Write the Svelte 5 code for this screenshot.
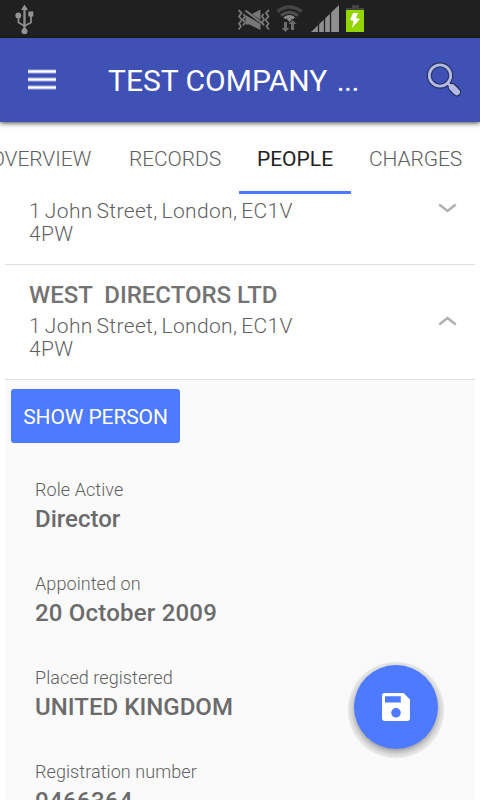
<script>
	const tabs = [
		{ label: 'OVERVIEW', width: 140 },
		{ label: 'RECORDS', width: 128 },
		{ label: 'PEOPLE', width: 112 },
		{ label: 'CHARGES', width: 129 }
	];
	let activeTab = $state('PEOPLE');

	let people = $state([
		{ name: '', address: '1 John Street, London, EC1V 4PW', open: false },
		{ name: 'WEST  DIRECTORS LTD', address: '1 John Street, London, EC1V 4PW', open: true }
	]);

	const details = [
		{ label: 'Role Active', value: 'Director', spacing: 0 },
		{ label: 'Appointed on', value: '20 October 2009', spacing: 0.2 },
		{ label: 'Placed registered', value: 'UNITED KINGDOM', spacing: 0.03 },
		{ label: 'Registration number', value: '0466364', spacing: 0.35 }
	];
</script>

<div class="screen">
	<div class="status">
		<svg class="usb" width="20" height="32" viewBox="0 0 20 32">
			<g fill="none" stroke="#8c8c8c" stroke-width="1.8">
				<path d="M9.5 4v24" stroke-width="2.4" />
				<path d="M3.5 12v6.5l6 3.5M16 11v7.5L9.5 22" />
			</g>
			<g fill="#949494">
				<path d="M9.5 0.5l3.5 5.500H6z" />
				<circle cx="3.3" cy="11.500" r="2.900" />
				<path d="M13.3 7.5h5v5h-5z" />
				<circle cx="9.5" cy="27.2" r="3" />
			</g>
		</svg>
		<svg class="tray" width="150" height="38" viewBox="230 0 150 38">
			<g fill="none" stroke="#777" stroke-width="1.8">
				<path d="M238.500 10l3 3-2.500 3.500 3 3.500-3 3.500 2 3-2.500 3" />
				<path d="M243.500 14l1.500 2.500-2 3 2 3-2 3" />
				<path d="M269 10l-3 3 2.500 3.500-3 3.500 3 3.500-2 3 2.500 3" />
				<path d="M263.500 14l-1.500 2.500 2 3-2 3 2 3" />
			</g>
			<path d="M245.500 15v9.500h4l11 5.500v-6zM252 14l8.500-4.500V20z" fill="#777" />
			<path d="M245.500 10.500l17.500 13.500" stroke="#777" stroke-width="2.200" />
			<g fill="none">
				<path d="M277.500 11.500q12-9 24 0" stroke="#454545" stroke-width="3.600" />
				<path d="M281 15.500q8.500-6.500 17 0" stroke="#505050" stroke-width="3" />
				<path d="M284.300 18.300q5-3.800 10 0" stroke="#8a8a8a" stroke-width="2.600" />
			</g>
			<path d="M286.500 18.500q3-1.500 6 0l-3 3.500z" fill="#8a8a8a" />
			<path d="M284 22h3v6h2.500l-4 4-4-4H284zM291 30v-6h-2.500l4-4 4 4H294v6z" fill="#6c6c6c" />
			<path d="M311 32l28-27v27z" fill="#8f8f8f" />
			<path d="M318.500 24v8M324.500 18v14M330.500 12v20" stroke="#202020" stroke-width="1.300" />
			<path d="M352 5h7v3h5v2h-18V8h6z" fill="#434343" />
			<path d="M346 10h18v22h-18z" fill="#93d500" />
			<path d="M353 13h5l-2 5 4 1-8 9 1.500-7-3.500-1z" fill="#fff" />
			<path d="M373 13h1v2h-1zM373 22h1v2h-1z" fill="#2a2a2a" />
		</svg>
	</div>

	<header class="toolbar">
		<svg width="28" height="22" viewBox="0 0 28 22">
			<path d="M0 2.500h28M0 10.500h28M0 18.500h28" stroke="#a9b0de" stroke-width="4" />
			<path d="M0 2.500h28M0 10.500h28M0 18.500h28" stroke="#fff" stroke-width="2" />
		</svg>
		<h1>TEST COMPANY <span>...</span></h1>
		<svg width="36" height="36" viewBox="0 0 36 36">
			<g stroke="#262f62" fill="none">
				<circle cx="14" cy="13.500" r="10.700" stroke-width="5" />
				<path d="M21.500 21l3 3" stroke-width="5" />
				<path d="M26.200 25.500l4.500 4.500" stroke-width="9" stroke-linecap="round" />
			</g>
			<g stroke="#b3bbe3" fill="none">
				<circle cx="14" cy="13.500" r="10.700" stroke-width="2.800" />
				<path d="M21.500 21l3 3" stroke-width="2.500" />
				<path d="M26.200 25.500l4.500 4.500" stroke-width="6.500" stroke-linecap="round" />
			</g>
		</svg>
	</header>

	<nav class="tabs">
		{#each tabs as tab}
			<button
				class="tab"
				class:active={tab.label === activeTab}
				style="width: {tab.width}px"
				onclick={() => (activeTab = tab.label)}
			>
				{tab.label}
			</button>
		{/each}
	</nav>

	<main class="content">
		<div class="list">
			{#each people as person}
				<div class="person" onclick={() => (person.open = !person.open)} role="presentation">
					<div class="info">
						<div class="name">{person.name}</div>
						<div class="address">{person.address}</div>
					</div>
					<svg class="chevron" class:open={person.open} width="19" height="12" viewBox="0 0 19 12">
						<path d="M1.200 3.500l8.300 6.500L17.800 3.500" fill="none" stroke="#b0b0b0" stroke-width="2.400" />
					</svg>
				</div>
				{#if person.open}
					<div class="details">
						<button class="show">SHOW PERSON</button>
						{#each details as item}
							<div class="field">
								<div class="label">{item.label}</div>
								<div class="value" style="letter-spacing: {item.spacing}px">{item.value}</div>
							</div>
						{/each}
					</div>
				{/if}
			{/each}
		</div>
	</main>

	<button class="fab" aria-label="Save">
		<svg width="28" height="28" viewBox="0 0 28 28">
			<path
				d="M3 0h18.500L28 6.500V25a3 3 0 0 1-3 3H3a3 3 0 0 1-3-3V3a3 3 0 0 1 3-3z M3 3.300v6.200h15.800V3.300z M14 15a4.800 4.800 0 1 0 0 9.600a4.800 4.800 0 0 0 0-9.600z"
				fill="#fff"
				fill-rule="evenodd"
			/>
		</svg>
	</button>
</div>

<style>
	:global(body) {
		margin: 0;
		background: #fff;
	}
	.screen {
		position: relative;
		display: flex;
		flex-direction: column;
		width: 480px;
		height: 800px;
		overflow: hidden;
		background: #fff;
		font-family: Roboto, sans-serif;
		color: #737373;
	}
	button {
		border: 0;
		padding: 0;
		font-family: inherit;
		cursor: pointer;
	}
	svg {
		display: block;
		flex: none;
	}
	.status {
		display: flex;
		flex: none;
		justify-content: space-between;
		height: 38px;
		background: #202020;
	}
	.usb {
		margin: 4px 0 0 15px;
	}
	.tray {
		margin-right: 100px;
	}
	.toolbar {
		display: flex;
		flex: none;
		align-items: center;
		box-sizing: border-box;
		height: 84px;
		padding: 0 18px 0 28px;
		background: #3f51b5;
		box-shadow: 0 1px 5px rgba(0, 0, 0, 0.75);
		z-index: 2;
	}
	h1 {
		flex: 1;
		margin: 0 0 0 52px;
		padding-top: 2px;
		font-size: 30px;
		font-weight: 400;
		line-height: 36px;
		color: #fff;
		white-space: nowrap;
	}
	h1 span {
		margin-left: 2px;
		letter-spacing: -0.6px;
	}
	.tabs {
		display: flex;
		flex: none;
		width: 509px;
		height: 72px;
		margin-left: -29px;
		background: #fff;
		z-index: 1;
	}
	.tab {
		flex: none;
		box-sizing: border-box;
		padding-top: 5px;
		background: none;
		border-bottom: 3px solid transparent;
		font-size: 21px;
		font-weight: 300;
		letter-spacing: -0.1px;
		color: #606060;
	}
	.tab.active {
		border-bottom-color: #4d7aff;
		color: #222;
		font-weight: 400;
		letter-spacing: 0;
	}
	.content {
		flex: 1;
		min-height: 0;
		overflow: hidden;
	}
	/* the list is scrolled so that the first name sits under the tabs */
	.list {
		margin: -44px 5px 0;
	}
	.person {
		display: flex;
		align-items: center;
		box-sizing: border-box;
		height: 115px;
		padding: 0 18px 0 24px;
		border-bottom: 1px solid #e0e0e0;
	}
	.info {
		width: 300px;
		margin-right: auto;
	}
	.name {
		height: 24px;
		padding-bottom: 8px;
		font-size: 24px;
		font-weight: 500;
		line-height: 24px;
		white-space: pre;
	}
	.address {
		width: 280px;
		font-size: 21px;
		font-weight: 300;
		line-height: 23px;
		letter-spacing: 0.35px;
		word-spacing: -1.6px;
		color: #5f5f5f;
	}
	.chevron.open {
		transform: scaleY(-1);
	}
	.details {
		padding: 9px 6px 0;
		background: #fafafa;
	}
	.show {
		display: block;
		width: 169px;
		height: 54px;
		padding-top: 2px;
		margin-bottom: 34px;
		border-radius: 3px;
		background: #4d7aff;
		color: #fff;
		font-size: 21px;
		letter-spacing: -0.1px;
	}
	.field {
		height: 94px;
		padding-left: 24px;
	}
	.label {
		font-size: 18px;
		line-height: 26px;
		font-weight: 300;
		letter-spacing: 0.08px;
		color: #5f5f5f;
	}
	.value {
		font-size: 24px;
		line-height: 32px;
		font-weight: 500;
		color: #6b6b6b;
	}
	.fab {
		position: absolute;
		left: 354px;
		top: 665px;
		display: flex;
		align-items: center;
		justify-content: center;
		width: 84px;
		height: 84px;
		border-radius: 50%;
		background: #4d7aff;
		box-shadow: 0 3px 6px rgba(0, 0, 0, 0.35), 0 3px 1px 6px rgba(0, 0, 0, 0.07);
	}
</style>
